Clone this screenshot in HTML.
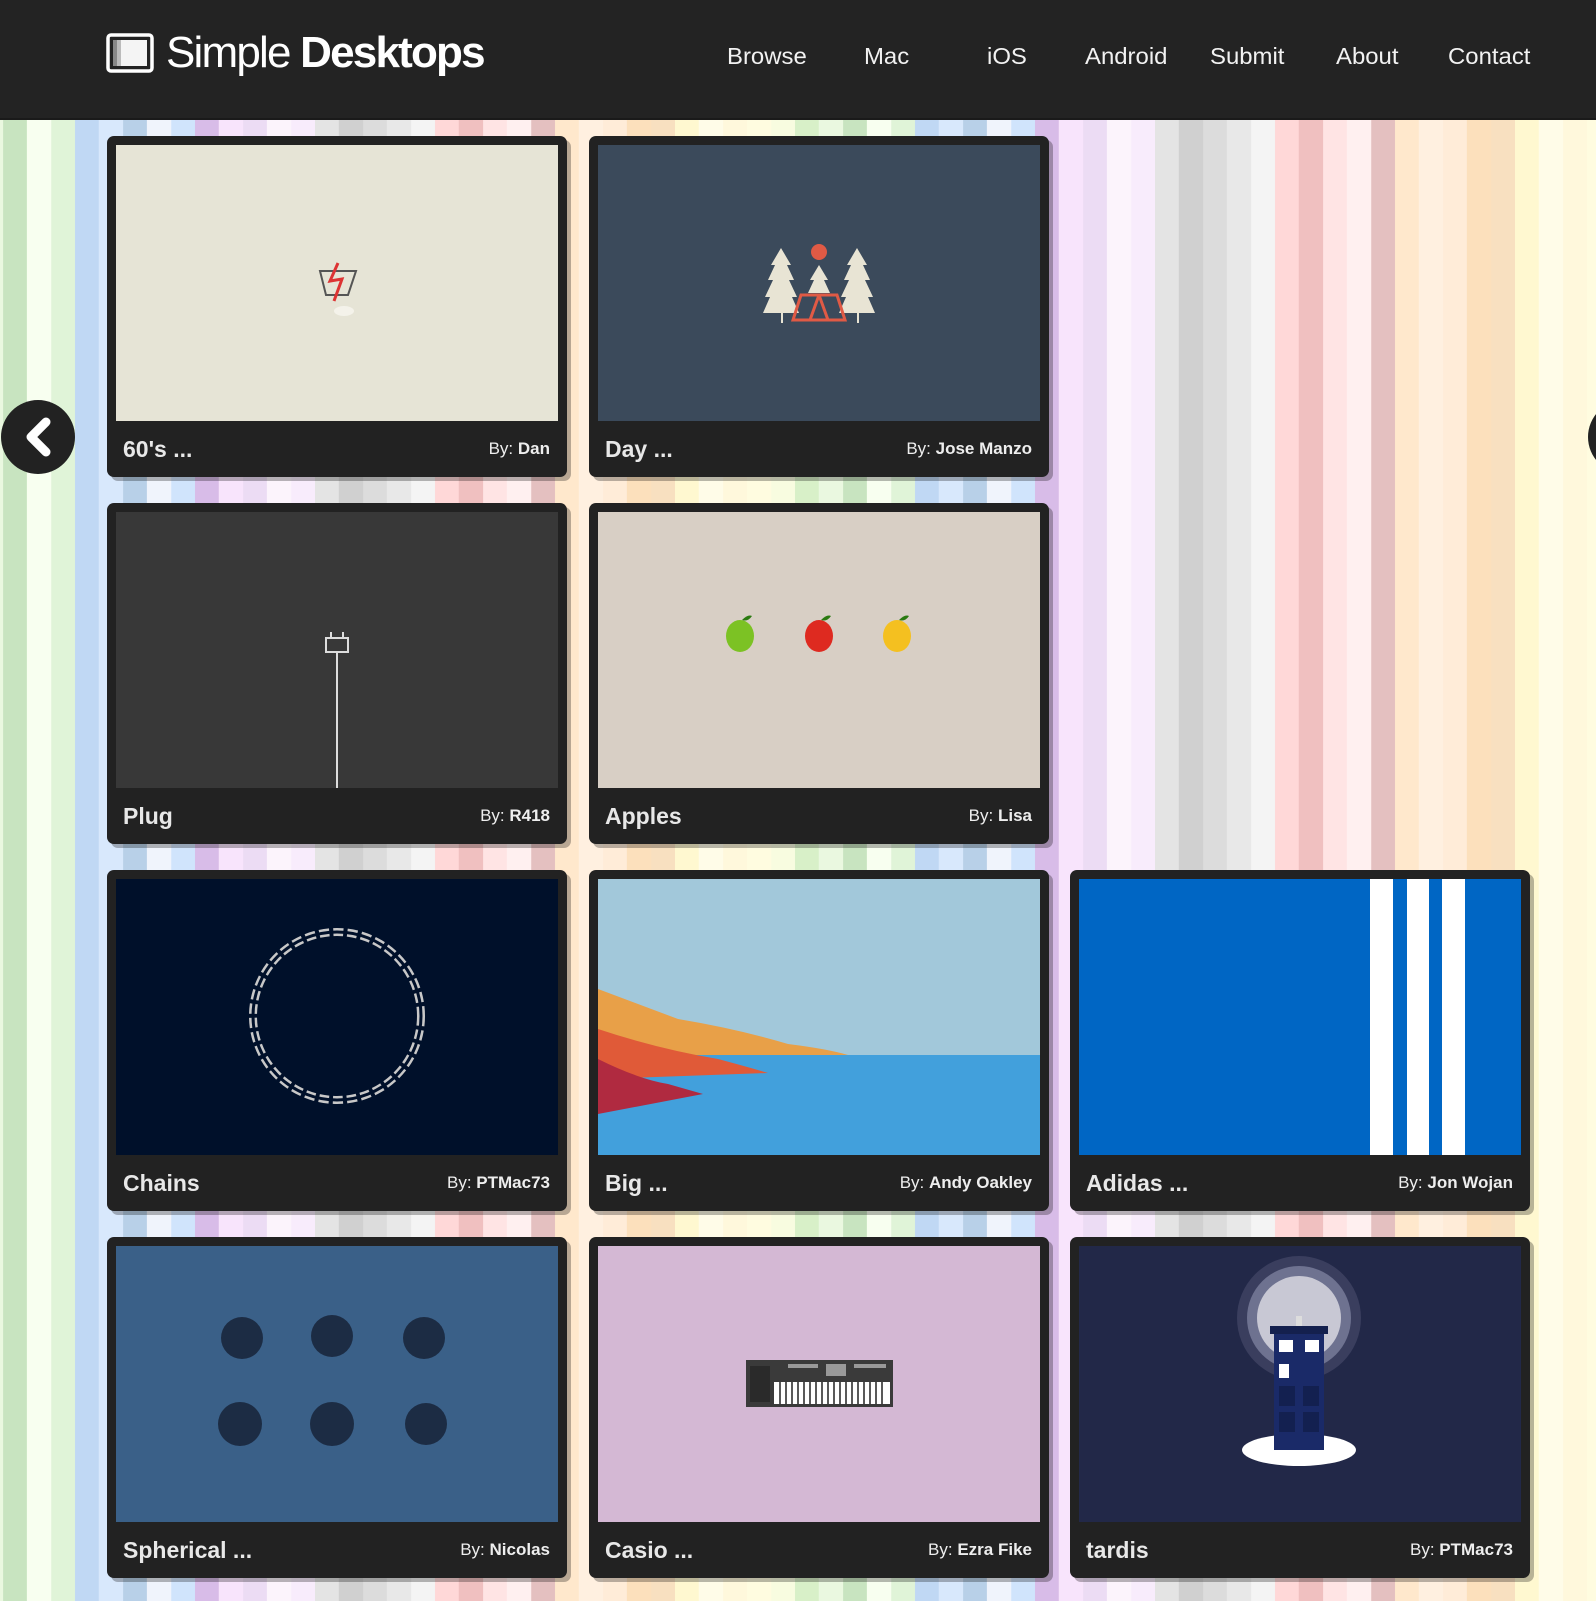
<!DOCTYPE html>
<html><head><meta charset="utf-8">
<style>
*{margin:0;padding:0;box-sizing:border-box}
body{width:1596px;height:1601px;overflow:hidden;position:relative;font-family:"Liberation Sans",Arial,sans-serif;
background-image:linear-gradient(to right,
#d8f0c8 0 24px,#eaf8e0 24px 48px,#c8e4c0 48px 72px,#f8fff0 72px 96px,#e0f4d8 96px 120px,
#c0d8f4 120px 144px,#d8e8fc 144px 168px,#b8d0e8 168px 192px,#f0f4fc 192px 216px,#d0e4fc 216px 240px,
#d8bce8 240px 264px,#f8e4fc 264px 288px,#ecdcf4 288px 312px,#fcf4fc 312px 336px,#f8ecfc 336px 360px,
#e4e4e4 360px 384px,#d0d0d0 384px 408px,#dcdcdc 408px 432px,#e8e8e8 432px 456px,#f4f4f4 456px 480px,
#ffd8d8 480px 504px,#f0c0c0 504px 528px,#ffe4e4 528px 552px,#fff0f0 552px 576px,#e4c0c0 576px 600px,
#ffe8cc 600px 624px,#fff0e0 624px 648px,#ffecd8 648px 672px,#fce0bc 672px 696px,#f8e0c0 696px 720px,
#fff8d0 720px 744px,#fffce8 744px 768px,#fff8dc 768px 792px,#fffce0 792px 816px,#f8fce0 816px 840px);
background-size:840px 100%;background-position:-45px 0;}
.hdr{position:absolute;left:0;top:0;width:1596px;height:120px;background:#232323;border-bottom:2px solid #1a1a1a}
.nav{position:absolute;top:43px;color:#f2f2f2;font-size:23px;transform:scaleX(1.04);transform-origin:left}
.logo{position:absolute;left:166px;top:28px;color:#fff;font-size:44px;letter-spacing:-1.8px;white-space:nowrap}
.logo b{font-weight:bold}
.card{position:absolute;width:460px;height:341px;background:#222;border-radius:7px;box-shadow:4px 4px 0 rgba(0,0,0,.28)}
.img{position:absolute;left:9px;top:9px;width:442px;height:276px;overflow:hidden}
.img svg{display:block}
.t{position:absolute;left:16px;top:300px;color:#e8e8e8;font-size:23px;font-weight:bold}
.by{position:absolute;right:17px;top:303px;color:#eee;font-size:17px}
.by b{font-weight:bold}
</style></head><body>
<div class="hdr">
  <svg style="position:absolute;left:106px;top:33px" width="48" height="40" viewBox="0 0 48 40">
    <rect x="2" y="2" width="44" height="36" rx="3" fill="none" stroke="#fff" stroke-width="3.5"/>
    <rect x="7" y="7" width="34" height="26" fill="#f4f4f4"/>
    <rect x="7" y="7" width="4" height="26" fill="#888"/><rect x="11" y="7" width="4" height="26" fill="#bbb"/>
  </svg>
  <div class="logo">Simple <b>Desktops</b></div>
  <div class="nav" style="left:727px">Browse</div>
  <div class="nav" style="left:864px">Mac</div>
  <div class="nav" style="left:987px">iOS</div>
  <div class="nav" style="left:1085px">Android</div>
  <div class="nav" style="left:1210px">Submit</div>
  <div class="nav" style="left:1336px">About</div>
  <div class="nav" style="left:1448px">Contact</div>
</div>

<svg style="position:absolute;left:1px;top:400px" width="74" height="74"><circle cx="37" cy="37" r="37" fill="#222"/><path d="M45 22 L30 37 L45 52" fill="none" stroke="#fff" stroke-width="9" stroke-linecap="round" stroke-linejoin="round"/></svg>
<svg style="position:absolute;left:1588px;top:400px" width="10" height="74"><circle cx="37" cy="37" r="37" fill="#222"/></svg>

<div class="card" style="left:107px;top:136px"><div class="img" style="background:#e6e4d6">
<svg width="442" height="276"><path d="M204 126 L240 126 L232 150 L210 150 Z" fill="none" stroke="#555" stroke-width="2"/><path d="M222 118 L214 136 L226 134 L218 156" fill="none" stroke="#d33" stroke-width="3"/><ellipse cx="228" cy="166" rx="10" ry="5" fill="#f4f2ea"/></svg></div>
<div class="t">60's ...</div><div class="by">By: <b>Dan</b></div></div>

<div class="card" style="left:589px;top:136px"><div class="img" style="background:#3b4a5b">
<svg width="442" height="276"><circle cx="221" cy="107" r="8" fill="#e05a45"/>
<g fill="#e8e4d4"><path d="M183 103 L173 120 L177 120 L170 135 L175 135 L167 152 L172 152 L165 168 L201 168 L194 152 L199 152 L191 135 L196 135 L189 120 L193 120 Z"/><path d="M259 103 L249 120 L253 120 L246 135 L251 135 L243 152 L248 152 L241 168 L277 168 L270 152 L275 152 L267 135 L272 135 L265 120 L269 120 Z"/><path d="M221 120 L212 135 L216 135 L210 148 L232 148 L226 135 L230 135 Z"/></g>
<path d="M203 150 L239 150 L247 175 L195 175 Z M221 150 L212 175 M221 150 L230 175" fill="none" stroke="#e05a45" stroke-width="3"/>
<rect x="183" y="168" width="2" height="10" fill="#e8e4d4"/><rect x="259" y="168" width="2" height="10" fill="#e8e4d4"/></svg></div>
<div class="t">Day ...</div><div class="by">By: <b>Jose Manzo</b></div></div>

<div class="card" style="left:107px;top:503px"><div class="img" style="background:#383838">
<svg width="442" height="276"><rect x="220" y="140" width="2" height="136" fill="#ddd"/><path d="M210 126 L232 126 L232 140 L210 140 Z M215 120 V126 M227 120 V126" fill="none" stroke="#ddd" stroke-width="2"/></svg></div>
<div class="t">Plug</div><div class="by">By: <b>R418</b></div></div>

<div class="card" style="left:589px;top:503px"><div class="img" style="background:#d8cfc5">
<svg width="442" height="276"><ellipse cx="142" cy="124" rx="14" ry="16" fill="#7cc224"/><ellipse cx="221" cy="124" rx="14" ry="16" fill="#de2a20"/><ellipse cx="299" cy="124" rx="14" ry="16" fill="#f4c020"/>
<g fill="#2a7a10"><path d="M144 108 q6 -6 10 -4 q-4 6 -10 4"/><path d="M223 108 q6 -6 10 -4 q-4 6 -10 4"/><path d="M301 108 q6 -6 10 -4 q-4 6 -10 4"/></g></svg></div>
<div class="t">Apples</div><div class="by">By: <b>Lisa</b></div></div>

<div class="card" style="left:107px;top:870px"><div class="img" style="background:#00102a">
<svg width="442" height="276"><circle cx="221" cy="137" r="84" fill="none" stroke="#c8c8c8" stroke-width="8" stroke-dasharray="10 4"/><circle cx="221" cy="137" r="84" fill="none" stroke="#00102a" stroke-width="3"/></svg></div>
<div class="t">Chains</div><div class="by">By: <b>PTMac73</b></div></div>

<div class="card" style="left:589px;top:870px"><div class="img" style="background:#a2c8da">
<svg width="442" height="276"><rect y="176" width="442" height="100" fill="#42a0dc"/>
<path d="M0 110 Q40 125 80 140 Q140 150 190 165 Q230 170 250 176 L0 176 Z" fill="#e8a048"/>
<path d="M0 150 Q60 170 120 180 Q150 188 170 194 L0 200 Z" fill="#e05a38"/>
<path d="M0 180 Q40 200 70 205 L105 215 L0 235 Z" fill="#b02a40"/></svg></div>
<div class="t">Big ...</div><div class="by">By: <b>Andy Oakley</b></div></div>

<div class="card" style="left:1070px;top:870px"><div class="img" style="background:#0066c4">
<svg width="442" height="276"><rect x="291" width="23" height="276" fill="#fff"/><rect x="328" width="22" height="276" fill="#fff"/><rect x="363" width="23" height="276" fill="#fff"/></svg></div>
<div class="t">Adidas ...</div><div class="by">By: <b>Jon Wojan</b></div></div>

<div class="card" style="left:107px;top:1237px"><div class="img" style="background:#3a6088">
<svg width="442" height="276"><g fill="#1c2c44"><circle cx="126" cy="92" r="21"/><circle cx="216" cy="90" r="21"/><circle cx="308" cy="92" r="21"/><circle cx="124" cy="178" r="22"/><circle cx="216" cy="178" r="22"/><circle cx="310" cy="178" r="21"/></g></svg></div>
<div class="t">Spherical ...</div><div class="by">By: <b>Nicolas</b></div></div>

<div class="card" style="left:589px;top:1237px"><div class="img" style="background:#d4b8d4">
<svg width="442" height="276"><rect x="148" y="114" width="147" height="47" fill="#3a3a3a"/><rect x="176" y="136" width="116" height="22" fill="#fff"/>
<g stroke="#222" stroke-width="1.5"><path d="M182 136v22M188 136v22M194 136v22M200 136v22M206 136v22M212 136v22M218 136v22M224 136v22M230 136v22M236 136v22M242 136v22M248 136v22M254 136v22M260 136v22M266 136v22M272 136v22M278 136v22M284 136v22"/></g>
<rect x="152" y="120" width="20" height="36" fill="#2a2a2a"/><g fill="#999"><rect x="190" y="118" width="30" height="4"/><rect x="228" y="118" width="20" height="12"/><rect x="256" y="118" width="32" height="4"/></g></svg></div>
<div class="t">Casio ...</div><div class="by">By: <b>Ezra Fike</b></div></div>

<div class="card" style="left:1070px;top:1237px"><div class="img" style="background:#222848">
<svg width="442" height="276"><circle cx="220" cy="72" r="62" fill="#3a3e5e"/><circle cx="220" cy="72" r="52" fill="#6e7290"/><circle cx="220" cy="72" r="42" fill="#c8c8d4"/>
<ellipse cx="220" cy="204" rx="57" ry="16" fill="#fff"/>
<rect x="195" y="84" width="50" height="120" fill="#1a2a68"/><rect x="191" y="80" width="58" height="8" fill="#14204e"/><rect x="217" y="70" width="6" height="10" fill="#ddd"/>
<g fill="#fff"><rect x="200" y="94" width="14" height="12"/><rect x="226" y="94" width="14" height="12"/><rect x="200" y="118" width="10" height="14"/></g>
<g fill="#132050"><rect x="200" y="140" width="16" height="20"/><rect x="224" y="140" width="16" height="20"/><rect x="200" y="166" width="16" height="20"/><rect x="224" y="166" width="16" height="20"/></g></svg></div>
<div class="t">tardis</div><div class="by">By: <b>PTMac73</b></div></div>
</body></html>
